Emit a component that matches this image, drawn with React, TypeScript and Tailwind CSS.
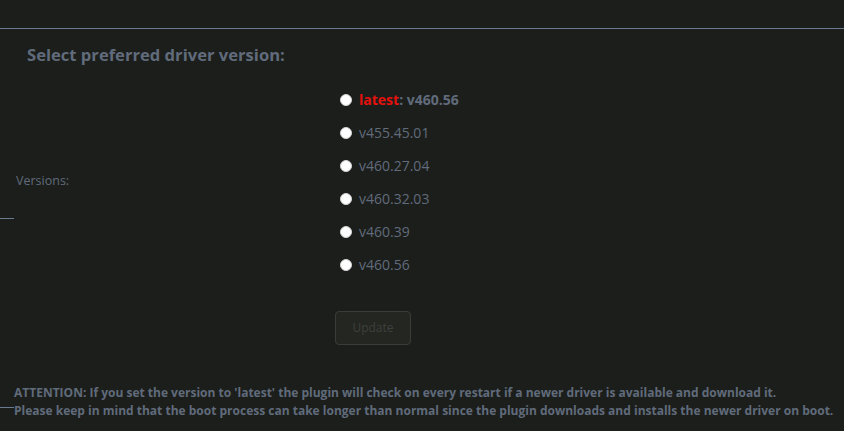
import {useState} from 'react';

const versions = ['latest', 'v455.45.01', 'v460.27.04', 'v460.32.03', 'v460.39', 'v460.56'];
const latest = 'v460.56';

const App = () => {
  const [selected, setSelected] = useState('');

  return (
    <div
      className="bg-[#1c1e1b] w-[844px] h-[431px] overflow-hidden text-[#606b7b]"
      style={{fontFamily: '"Open Sans", "DejaVu Sans", sans-serif'}}
    >
      <div className="h-[28px]" />
      <div className="h-px bg-[#6b7a8f]" />

      <h2 className="pl-[27px] pt-[14px] text-[16.6px] leading-[24px] font-bold">
        Select preferred driver version:
      </h2>

      <div className="flex mt-[16px]">
        <div className="w-[335px] shrink-0 flex flex-col">
          <div className="h-[89px]" />
          <span className="pl-[16px] text-[12.5px] leading-[18px]">Versions:</span>
          <div className="mt-[28px] w-[14px] h-px bg-[#6b7a8f]" />
        </div>

        <div className="flex flex-col">
          {versions.map(v => (
            <label
              key={v}
              onClick={() => setSelected(v)}
              className="flex items-center h-[33px] cursor-pointer"
            >
              <span className="ml-[5px] w-[12px] h-[12px] rounded-full bg-white border border-[#d4d4d4] flex items-center justify-center">
                {selected === v && <span className="w-[6px] h-[6px] rounded-full bg-[#1c1e1b]" />}
              </span>
              {v === 'latest' ? (
                <span className="ml-[7px] text-[14px] font-bold">
                  <span className="text-[#e5110e]">latest</span>: {latest}
                </span>
              ) : (
                <span className="ml-[7px] text-[14px]">{v}</span>
              )}
            </label>
          ))}

          <button
            disabled
            className="mt-[30px] w-[76px] h-[34px] rounded-[4px] border border-[#3a3c38] bg-[#242622] text-[#3e403c] text-[12px]"
          >
            Update
          </button>
        </div>
      </div>

      <div className="mt-[39px] flex">
        <div className="w-[14px] shrink-0 flex flex-col">
          <div className="h-[23px]" />
          <div className="h-px bg-[#6b7a8f]" />
        </div>
        <p className="text-[12px] leading-[18px] font-bold">
          ATTENTION: If you set the version to 'latest' the plugin will check on every restart if a newer driver is available and download it.
          <br />
          Please keep in mind that the boot process can take longer than normal since the plugin downloads and installs the newer driver on boot.
        </p>
      </div>
    </div>
  );
};

export default App;
